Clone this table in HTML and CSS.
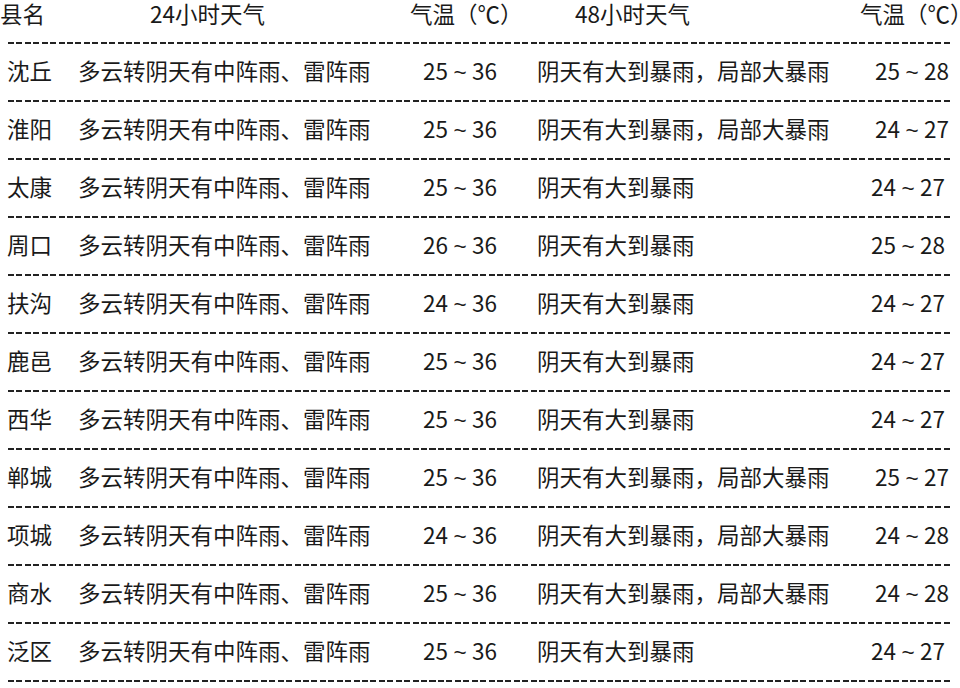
FILE: index.html
```html
<!DOCTYPE html>
<html lang="zh-CN">
<head>
<meta charset="utf-8">
<title>天气预报</title>
<link rel="stylesheet" href="styles.css">
</head>
<body>
<div class="table">
  <div class="head">
    <span>县名</span><span>24小时天气</span><span>气温（℃）</span><span>48小时天气</span><span>气温（℃）</span>
  </div>
  <div class="dash"></div>
  <div class="row long"><span>沈丘</span><span>多云转阴天有中阵雨、雷阵雨</span><span>25<span class="sep">~</span>36</span><span>阴天有大到暴雨，局部大暴雨</span><span>25<span class="sep">~</span>28</span></div>
  <div class="dash"></div>
  <div class="row long"><span>淮阳</span><span>多云转阴天有中阵雨、雷阵雨</span><span>25<span class="sep">~</span>36</span><span>阴天有大到暴雨，局部大暴雨</span><span>24<span class="sep">~</span>27</span></div>
  <div class="dash"></div>
  <div class="row"><span>太康</span><span>多云转阴天有中阵雨、雷阵雨</span><span>25<span class="sep">~</span>36</span><span>阴天有大到暴雨</span><span>24<span class="sep">~</span>27</span></div>
  <div class="dash"></div>
  <div class="row"><span>周口</span><span>多云转阴天有中阵雨、雷阵雨</span><span>26<span class="sep">~</span>36</span><span>阴天有大到暴雨</span><span>25<span class="sep">~</span>28</span></div>
  <div class="dash"></div>
  <div class="row"><span>扶沟</span><span>多云转阴天有中阵雨、雷阵雨</span><span>24<span class="sep">~</span>36</span><span>阴天有大到暴雨</span><span>24<span class="sep">~</span>27</span></div>
  <div class="dash"></div>
  <div class="row"><span>鹿邑</span><span>多云转阴天有中阵雨、雷阵雨</span><span>25<span class="sep">~</span>36</span><span>阴天有大到暴雨</span><span>24<span class="sep">~</span>27</span></div>
  <div class="dash"></div>
  <div class="row"><span>西华</span><span>多云转阴天有中阵雨、雷阵雨</span><span>25<span class="sep">~</span>36</span><span>阴天有大到暴雨</span><span>24<span class="sep">~</span>27</span></div>
  <div class="dash"></div>
  <div class="row long"><span>郸城</span><span>多云转阴天有中阵雨、雷阵雨</span><span>25<span class="sep">~</span>36</span><span>阴天有大到暴雨，局部大暴雨</span><span>25<span class="sep">~</span>27</span></div>
  <div class="dash"></div>
  <div class="row long"><span>项城</span><span>多云转阴天有中阵雨、雷阵雨</span><span>24<span class="sep">~</span>36</span><span>阴天有大到暴雨，局部大暴雨</span><span>24<span class="sep">~</span>28</span></div>
  <div class="dash"></div>
  <div class="row long"><span>商水</span><span>多云转阴天有中阵雨、雷阵雨</span><span>25<span class="sep">~</span>36</span><span>阴天有大到暴雨，局部大暴雨</span><span>24<span class="sep">~</span>28</span></div>
  <div class="dash"></div>
  <div class="row"><span>泛区</span><span>多云转阴天有中阵雨、雷阵雨</span><span>25<span class="sep">~</span>36</span><span>阴天有大到暴雨</span><span>24<span class="sep">~</span>27</span></div>
  <div class="dash"></div>
</div>
</body>
</html>
```

FILE: styles.css
```css
html, body {
  margin: 0;
  padding: 0;
  background: #ffffff;
}

body {
  font-family: "Noto Sans CJK SC", "Noto Sans", sans-serif;
  font-size: 22.5px;
  color: #1a1a1a;
  overflow: hidden;
}

.table {
  width: 960px;
}

.head {
  display: grid;
  grid-template-columns: 150px 260px 165px 285px auto;
  height: 42px;
  line-height: 26px;
  white-space: nowrap;
}

.dash {
  height: 2px;
  margin: 0 8px;
  background-image: repeating-linear-gradient(to right, #222 0 6px, transparent 6px 8.43px);
}

.row {
  display: grid;
  grid-template-columns: 71px 345px 114px 334px auto;
  height: 56px;
  line-height: 52px;
  padding-left: 7px;
  white-space: nowrap;
}

.row.long {
  grid-template-columns: 71px 345px 114px 338px auto;
}

.sep {
  display: inline-block;
  width: 24px;
  text-align: center;
  font-family: "Liberation Sans", sans-serif;
}
```
